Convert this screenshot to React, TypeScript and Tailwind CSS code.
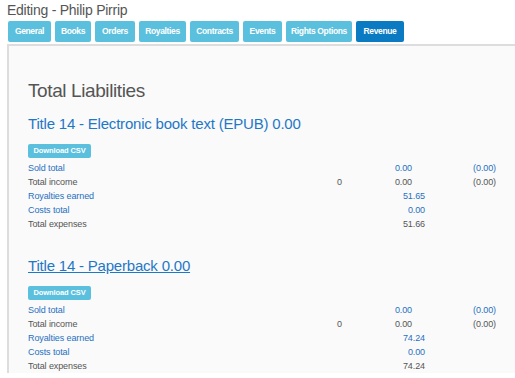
import React from "react";

const font = { fontFamily: '"Liberation Sans", Arial, sans-serif' };

type Tab = { label: string; w: string; active?: boolean };

const tabs: Tab[] = [
  { label: "General", w: "w-[43px]" },
  { label: "Books", w: "w-[36px]" },
  { label: "Orders", w: "w-[40px]" },
  { label: "Royalties", w: "w-[47px]" },
  { label: "Contracts", w: "w-[49px]" },
  { label: "Events", w: "w-[39px]" },
  { label: "Rights Options", w: "w-[66px]" },
  { label: "Revenue", w: "w-[48px]", active: true },
];

const BLUE = "text-[#2770c2]";
const GRAY = "text-[#555555]";

function Rows({ earned, costs, expenses }: { earned: string; costs: string; expenses: string }) {
  return (
    <div className="mt-[3px] text-[9px] leading-[14px] tracking-[-0.1px]">
      <div className="flex">
        <div className={`w-[272px] ${BLUE}`}>Sold total</div>
        <div className="w-[42px]" />
        <div className={`w-[70px] text-right ${BLUE}`}>0.00</div>
        <div className={`w-[84px] text-right ${BLUE}`}>(0.00)</div>
      </div>
      <div className="flex">
        <div className={`w-[272px] ${GRAY}`}>Total income</div>
        <div className={`w-[42px] text-right ${GRAY}`}>0</div>
        <div className={`w-[70px] text-right ${GRAY}`}>0.00</div>
        <div className={`w-[84px] text-right ${GRAY}`}>(0.00)</div>
      </div>
      <div className="flex">
        <div className={`w-[272px] ${BLUE}`}>Royalties earned</div>
        <div className="w-[42px]" />
        <div className={`w-[83px] text-right ${BLUE}`}>{earned}</div>
      </div>
      <div className="flex">
        <div className={`w-[272px] ${BLUE}`}>Costs total</div>
        <div className="w-[42px]" />
        <div className={`w-[83px] text-right ${BLUE}`}>{costs}</div>
      </div>
      <div className="flex">
        <div className={`w-[272px] ${GRAY}`}>Total expenses</div>
        <div className="w-[42px]" />
        <div className={`w-[83px] text-right ${GRAY}`}>{expenses}</div>
      </div>
    </div>
  );
}

function CsvButton() {
  return (
    <div className="mt-[11px]">
      <button className="flex h-[14px] w-[63px] items-center justify-center rounded-[2px] bg-[#5bc0de] text-[7.5px] font-bold tracking-[-0.1px] text-white">
        Download CSV
      </button>
    </div>
  );
}

export default function App() {
  return (
    <div style={font} className="h-[378px] w-[515px] overflow-hidden bg-white pl-[7px] pt-[2px]">
      <h1 className="text-[14px] leading-[17px] tracking-[-0.25px] text-[#555555]">Editing - Philip Pirrip</h1>
      <div className="mt-[2px] flex gap-[4px] pl-[1px]">
        {tabs.map((t) => (
          <button
            key={t.label}
            className={`flex h-[21px] ${t.w} items-center justify-center rounded-[2px] text-[8.5px] font-bold tracking-[-0.35px] text-white ${
              t.active ? "bg-[#0a7bc2]" : "bg-[#5bc0de]"
            }`}
          >
            {t.label}
          </button>
        ))}
      </div>
      <div className="mt-[2px] w-[600px] border-l-2 border-t-2 border-[#dddddd] bg-[#fafafa] pl-[19px] pt-[34px]">
        <h2 className="text-[19px] leading-[22px] tracking-[-0.4px] text-[#555555]">Total Liabilities</h2>

        <div className="mt-[13px]">
          <div className="text-[15px] leading-[18px] tracking-[-0.2px] text-[#1f78c6]">
            Title 14 - Electronic book text (EPUB) 0.00
          </div>
          <CsvButton />
          <Rows earned="51.65" costs="0.00" expenses="51.66" />
        </div>

        <div className="mt-[26px]">
          <div className="text-[15px] leading-[18px] tracking-[-0.2px] text-[#1f78c6] underline">
            Title 14 - Paperback 0.00
          </div>
          <CsvButton />
          <Rows earned="74.24" costs="0.00" expenses="74.24" />
        </div>
      </div>
    </div>
  );
}
